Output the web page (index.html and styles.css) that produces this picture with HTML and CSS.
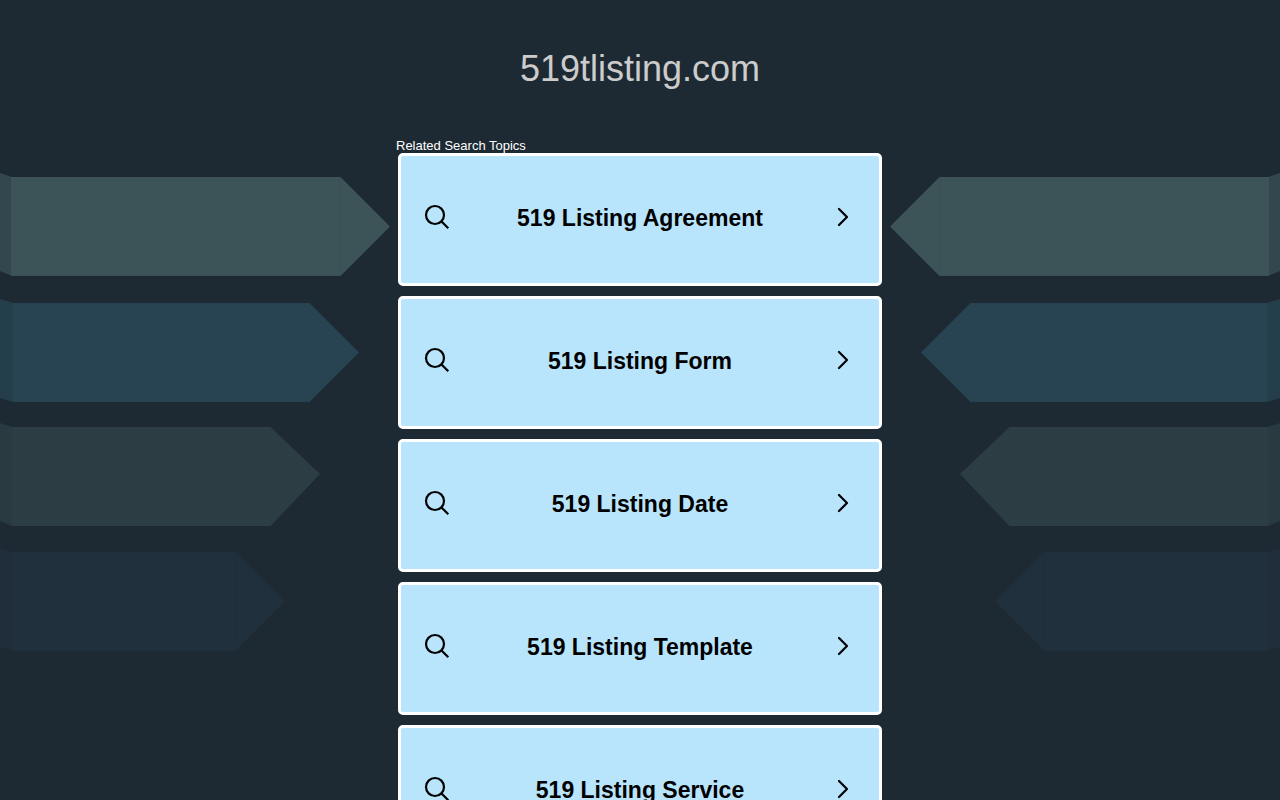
FILE: index.html
```html
<!DOCTYPE html>
<html lang="en">
<head>
<meta charset="utf-8">
<meta name="viewport" content="width=device-width, initial-scale=1">
<title>519tlisting.com</title>
<link rel="stylesheet" href="styles.css">
</head>
<body>
<svg width="0" height="0" class="sprite" aria-hidden="true">
  <symbol id="arrows" viewBox="0 0 390 480">
    <path fill="#33474f" d="M0 1L12 5V104L0 99Z"/>
    <path fill="#3c5357" d="M11 5H340.500L390 54.500L340.500 104H11Z"/>
    <path fill="none" stroke="#384f54" d="M340.500 5V104M11 103.500H340"/>
    <path fill="#253e4b" d="M0 127L13 131V230L0 226Z"/>
    <path fill="#284453" d="M13 131H309.500L359 180.500L309.500 230H13Z"/>
    <path fill="none" stroke="#264150" d="M309.500 131V230M13 131.500H309M13 229.500H309"/>
    <path fill="#293a41" d="M0 251L12 255V354L0 349Z"/>
    <path fill="#2c3e43" d="M12 255H270.500L320 302L270.500 354H12Z"/>
    <path fill="#1f2e3a" d="M0 376L12 380V478.500L0 475Z"/>
    <path fill="#20303c" d="M12 380H236L285 429.500L236 478.500H12Z"/>
    <path fill="none" stroke="#1f2e39" d="M235.500 380V478"/>
  </symbol>
  <symbol id="search" viewBox="0 0 26 26">
    <g fill="none" stroke="#000" stroke-width="2.200"><circle cx="11" cy="11" r="9"/><path d="M17 17L24.300 24.300"/></g>
  </symbol>
  <symbol id="chevron" viewBox="0 0 12 20">
    <path fill="none" stroke="#000" stroke-width="2.200" stroke-linecap="round" stroke-linejoin="round" d="M2 2L10 10L2 18"/>
  </symbol>
</svg>
<header class="header"><h1 class="title">519tlisting.com</h1></header>
<div class="stage">
  <svg class="arrows" aria-hidden="true"><use href="#arrows"/></svg>
  <main class="topics">
    <h2 class="label">Related Search Topics</h2>
    <nav class="list" aria-label="Related Search Topics">
      <a class="card" href="#"><svg class="search" aria-hidden="true"><use href="#search"/></svg><span class="text">519 Listing Agreement</span><svg class="chevron" aria-hidden="true"><use href="#chevron"/></svg></a>
      <a class="card" href="#"><svg class="search" aria-hidden="true"><use href="#search"/></svg><span class="text">519 Listing Form</span><svg class="chevron" aria-hidden="true"><use href="#chevron"/></svg></a>
      <a class="card" href="#"><svg class="search" aria-hidden="true"><use href="#search"/></svg><span class="text">519 Listing Date</span><svg class="chevron" aria-hidden="true"><use href="#chevron"/></svg></a>
      <a class="card" href="#"><svg class="search" aria-hidden="true"><use href="#search"/></svg><span class="text">519 Listing Template</span><svg class="chevron" aria-hidden="true"><use href="#chevron"/></svg></a>
      <a class="card" href="#"><svg class="search" aria-hidden="true"><use href="#search"/></svg><span class="text">519 Listing Service</span><svg class="chevron" aria-hidden="true"><use href="#chevron"/></svg></a>
    </nav>
  </main>
  <svg class="arrows arrows-right" aria-hidden="true"><use href="#arrows"/></svg>
</div>
</body>
</html>
```

FILE: styles.css
```css
* {
  box-sizing: border-box;
}

body {
  margin: 0;
  background: #1e2a33;
  font-family: "Liberation Sans", Arial, sans-serif;
}

.sprite {
  display: none;
}

.header {
  padding: 48px 16px;
  text-align: center;
}

.title {
  margin: 0;
  color: #ccc;
  font-size: 36px;
  font-weight: 400;
  line-height: 42px;
}

.stage {
  display: grid;
  grid-template-columns: 1fr minmax(0, 488px) 1fr;
}

.arrows {
  width: 390px;
  height: 480px;
  margin-top: 34px;
}

.arrows-right {
  justify-self: end;
  transform: scaleX(-1);
}

.label {
  margin: 0;
  color: #fff;
  font-size: 13px;
  font-weight: 400;
  line-height: 15px;
}

.list {
  display: flex;
  flex-direction: column;
  gap: 10px;
  padding: 0 2px 10px;
}

.card {
  display: flex;
  align-items: center;
  padding: 43px 30px 49px 23px;
  border: 3px solid #fff;
  border-radius: 5px;
  background: #b8e5fc;
  color: #000;
  font-size: 23px;
  font-weight: 700;
  line-height: 31px;
  text-decoration: none;
}

.text {
  flex: 1;
  padding: 4px 7px 0 0;
  text-align: center;
}

.search {
  width: 26px;
  height: 26px;
}

.chevron {
  width: 12px;
  height: 20px;
}
```
